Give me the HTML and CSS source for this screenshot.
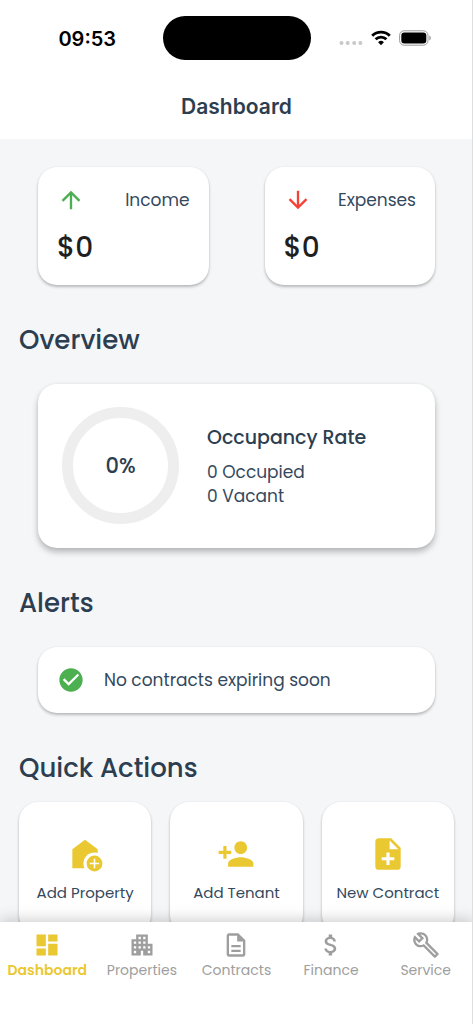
FILE: index.html
```html
<!DOCTYPE html>
<html lang="en">
<head>
<meta charset="utf-8">
<meta name="viewport" content="width=device-width, initial-scale=1">
<title>Dashboard</title>
<link rel="stylesheet" href="styles.css">
</head>
<body>
<div class="app">
  <header class="top">
    <div class="status">
      <span class="time">09:53</span>
      <span class="island"></span>
      <span class="indicators">
        <svg class="signal" width="24" height="16" viewBox="0 0 24 16" aria-hidden="true"><circle cx="2.500" cy="13" r="2"/><circle cx="8.700" cy="13" r="2"/><circle cx="15.200" cy="13" r="2"/><circle cx="21.400" cy="13" r="2"/></svg>
        <svg class="wifi" width="20" height="16" viewBox="0 0 20 16" aria-hidden="true"><g fill="none" stroke="#000" stroke-width="2.800"><path d="M1.200 5.700a12.400 12.400 0 0 1 17.600 0"/><path d="M4.600 9.300a7.600 7.600 0 0 1 10.800 0"/></g><path d="M10 15.300l-2.900-3a4.100 4.100 0 0 1 5.800 0z"/></svg>
        <svg width="33" height="16" viewBox="0 0 33 16" aria-hidden="true"><rect x=".6" y=".8" width="28.400" height="14.400" rx="4.600" fill="none" stroke="#999"/><rect x="2.300" y="2.600" width="25" height="10.800" rx="3" fill="#000"/><path d="M30.300 5.500c2 .7 2 4.300 0 5z" fill="#999"/></svg>
      </span>
    </div>
    <h1 class="title">Dashboard</h1>
  </header>

  <main class="content">
    <section class="totals">
      <article class="card total">
        <div class="total-head">
          <svg class="icon green" viewBox="0 0 24 24" aria-hidden="true"><path d="M4 12l1.410 1.410L11 7.830V20h2V7.830l5.580 5.590L20 12l-8-8z"/></svg>
          <span>Income</span>
        </div>
        <p class="amount">$0</p>
      </article>
      <article class="card total">
        <div class="total-head">
          <svg class="icon red" viewBox="0 0 24 24" aria-hidden="true"><path d="M20 12l-1.410-1.410L13 16.170V4h-2v12.170l-5.580-5.590L4 12l8 8z"/></svg>
          <span>Expenses</span>
        </div>
        <p class="amount">$0</p>
      </article>
    </section>

    <h2 class="heading">Overview</h2>
    <section class="card overview">
      <div class="ring">0%</div>
      <div class="occupancy">
        <h3>Occupancy Rate</h3>
        <p>0 Occupied</p>
        <p>0 Vacant</p>
      </div>
    </section>

    <h2 class="heading">Alerts</h2>
    <section class="card alert">
      <svg class="icon green" viewBox="0 0 24 24" aria-hidden="true"><path d="M12 2C6.480 2 2 6.480 2 12s4.480 10 10 10 10-4.480 10-10S17.520 2 12 2zm-2 15l-5-5 1.410-1.410L10 14.170l7.590-7.590L19 8l-9 9z"/></svg>
      <p>No contracts expiring soon</p>
    </section>

    <h2 class="heading">Quick Actions</h2>
    <section class="actions">
      <button class="card action" type="button">
        <svg viewBox="0 0 24 24" aria-hidden="true"><path d="M4 9l8-6 8 6v12H4z"/><circle cx="18" cy="18" r="7" fill="#fff"/><path fill-rule="evenodd" d="M18 13a5 5 0 1 0 0 10 5 5 0 0 0 0-10zm-.5 2h1v2.500H21v1h-2.500V21h-1v-2.500H15v-1h2.500z"/></svg>
        <span>Add Property</span>
      </button>
      <button class="card action" type="button">
        <svg viewBox="0 0 24 24" aria-hidden="true"><path d="M15 12c2.210 0 4-1.790 4-4s-1.790-4-4-4-4 1.790-4 4 1.790 4 4 4zm-9-2V7H4v3H1v2h3v3h2v-3h3v-2H6zm9 4c-2.670 0-8 1.340-8 4v2h16v-2c0-2.660-5.330-4-8-4z"/></svg>
        <span>Add Tenant</span>
      </button>
      <button class="card action" type="button">
        <svg viewBox="0 0 24 24" aria-hidden="true"><path d="M14 2H6c-1.100 0-1.990.9-1.990 2L4 20c0 1.100.89 2 1.990 2H18c1.100 0 2-.9 2-2V8l-6-6zm2 14h-3v3h-2v-3H8v-2h3v-3h2v3h3v2zm-3-7V3.500L18.500 9H13z"/></svg>
        <span>New Contract</span>
      </button>
    </section>
  </main>

  <nav class="tabs">
    <a class="tab active" href="#dashboard" aria-current="page">
      <svg class="icon" viewBox="0 0 24 24" aria-hidden="true"><path d="M3 13h8V3H3v10zm0 8h8v-6H3v6zm10 0h8V11h-8v10zm0-18v6h8V3h-8z"/></svg>
      <span>Dashboard</span>
    </a>
    <a class="tab" href="#properties">
      <svg class="icon" viewBox="0 0 24 24" aria-hidden="true"><path d="M17 11V3H7v4H3v14h8v-4h2v4h8V11h-4zM7 19H5v-2h2v2zm0-4H5v-2h2v2zm0-4H5V9h2v2zm4 4H9v-2h2v2zm0-4H9V9h2v2zm0-4H9V5h2v2zm4 8h-2v-2h2v2zm0-4h-2V9h2v2zm0-4h-2V5h2v2zm4 12h-2v-2h2v2zm0-4h-2v-2h2v2z"/></svg>
      <span>Properties</span>
    </a>
    <a class="tab" href="#contracts">
      <svg class="icon" viewBox="0 0 24 24" aria-hidden="true"><path d="M8 16h8v2H8zm0-4h8v2H8zm6-10H6c-1.100 0-2 .9-2 2v16c0 1.100.89 2 1.990 2H18c1.100 0 2-.9 2-2V8l-6-6zm4 18H6V4h7v5h5v11z"/></svg>
      <span>Contracts</span>
    </a>
    <a class="tab" href="#finance">
      <svg class="icon" viewBox="0 0 24 24" aria-hidden="true"><path d="M11.800 10.900c-2.270-.59-3-1.200-3-2.150 0-1.090 1.010-1.850 2.700-1.850 1.780 0 2.440.85 2.500 2.100h2.210c-.07-1.720-1.120-3.300-3.210-3.810V3h-3v2.160c-1.940.42-3.500 1.680-3.500 3.610 0 2.310 1.910 3.460 4.700 4.130 2.500.6 3 1.480 3 2.410 0 .69-.49 1.790-2.700 1.790-2.060 0-2.870-.92-2.980-2.100h-2.200c.12 2.190 1.760 3.420 3.680 3.830V21h3v-2.150c1.950-.37 3.500-1.500 3.500-3.550 0-2.840-2.430-3.810-4.700-4.400z"/></svg>
      <span>Finance</span>
    </a>
    <a class="tab" href="#service">
      <svg class="icon" viewBox="0 0 24 24" aria-hidden="true"><path d="M22.610 18.990l-9.080-9.080c.93-2.340.45-5.100-1.440-7C9.790.61 6.210.4 3.660 2.260L7.500 6.110 6.080 7.520 2.250 3.690C.39 6.230.6 9.820 2.900 12.110c1.860 1.860 4.570 2.350 6.890 1.480l9.110 9.110c.39.39 1.020.39 1.410 0l2.300-2.300c.4-.38.4-1.010 0-1.410zm-3 1.600l-9.460-9.460c-.61.45-1.290.72-2 .82-1.360.2-2.790-.21-3.830-1.250C3.370 9.760 2.930 8.500 3 7.260l3.090 3.090 4.240-4.240-3.090-3.090c1.240-.07 2.490.37 3.440 1.310 1.080 1.080 1.490 2.570 1.240 3.960-.12.71-.42 1.370-.88 1.960l9.450 9.450-.88.89z"/></svg>
      <span>Service</span>
    </a>
  </nav>
</div>
</body>
</html>
```
FILE: styles.css
```css
* { box-sizing: border-box; }

body {
  margin: 0;
  background: #fff;
  color: #2c3e50;
  font-family: Poppins, Inter, sans-serif;
  font-size: 17px;
  line-height: 24px;
}

h1, h2, h3, p { margin: 0; font-weight: 500; }
p { font-weight: 400; }
svg { flex: none; fill: currentColor; }

.app {
  position: relative;
  display: flex;
  flex-direction: column;
  height: 100vh;
}

/* hairline along the right edge of the screen */
.app::after {
  content: "";
  position: absolute;
  inset: 0 0 0 auto;
  width: 1px;
  background: #dcdee0;
}

.top { padding: 16px 0 20px; }

.status {
  display: grid;
  grid-template-columns: 1fr 148px 1fr;
  align-items: center;
}

.time {
  padding: 2px 0 0 12px;
  color: #000;
  font: 600 20px/24px Inter, sans-serif;
  text-align: center;
}

.island {
  height: 44px;
  border-radius: 22px;
  background: #000;
}

.indicators {
  display: flex;
  gap: 8px;
  padding-left: 28px;
}

.signal { color: #c9c9c9; }
.wifi { color: #000; }

.title {
  margin-top: 35px;
  font: 600 21px/24px Inter, sans-serif;
  text-align: center;
}

.content {
  flex: 1;
  min-height: 0;
  overflow: hidden;
  padding: 28px 19px 0;
  background: #f4f6f8;
}

.card {
  border-radius: 19px;
  background: #fff;
  box-shadow: 0 2px 3px rgba(0, 0, 0, .24), 0 0 2px rgba(0, 0, 0, .08);
}

.icon { width: 28px; height: 28px; }
.green { color: #4caf50; }
.red { color: #f44336; }

.totals {
  display: grid;
  grid-template-columns: 1fr 1fr;
  gap: 56px;
  padding: 0 19px;
}

.total { padding: 19px; }

.total-head {
  display: flex;
  align-items: center;
  justify-content: space-between;
  color: #34495e;
}

.amount {
  margin-top: 16px;
  color: #1f1f1f;
  font-size: 28px;
  font-weight: 500;
  line-height: 36px;
}

.heading {
  margin-top: 37px;
  font-size: 26px;
  line-height: 36px;
}

.overview {
  display: flex;
  align-items: center;
  gap: 28px;
  margin: 26px 19px 0;
  padding: 23px 24px 24px;
  box-shadow: 0 4px 6px rgba(0, 0, 0, .26), 0 0 3px rgba(0, 0, 0, .06);
}

.ring {
  display: grid;
  place-items: center;
  width: 117px;
  height: 117px;
  border: 11px solid #eee;
  border-radius: 50%;
  font-size: 21px;
  font-weight: 500;
}

.occupancy p, .alert p { color: #34495e; }

.occupancy h3 {
  margin-bottom: 8px;
  font-size: 19px;
  line-height: 28px;
}

.alert {
  display: flex;
  align-items: center;
  gap: 19px;
  margin: 26px 19px 0;
  padding: 19px;
}

.actions {
  display: grid;
  grid-template-columns: repeat(3, 1fr);
  gap: 19px;
  margin-top: 16px;
}

.action {
  display: flex;
  flex-direction: column;
  align-items: center;
  gap: 10px;
  height: 132px;
  padding: 33px 0 0;
  border: 0;
  color: #34495e;
  font: inherit;
  font-size: 15px;
  line-height: 20px;
  white-space: nowrap;
}

.action svg {
  width: 38px;
  height: 38px;
  color: #eac831;
}

.tabs {
  position: relative;
  display: grid;
  grid-template-columns: repeat(5, 1fr);
  height: 102px;
  padding-top: 9px;
  background: #fff;
  box-shadow: 0 -2px 14px rgba(0, 0, 0, .2);
}

.tab {
  display: flex;
  flex-direction: column;
  align-items: center;
  gap: 1px;
  color: #9e9e9e;
  font-size: 14px;
  line-height: 20px;
  text-decoration: none;
}

.active {
  color: #eac831;
  font-weight: 600;
}
```
